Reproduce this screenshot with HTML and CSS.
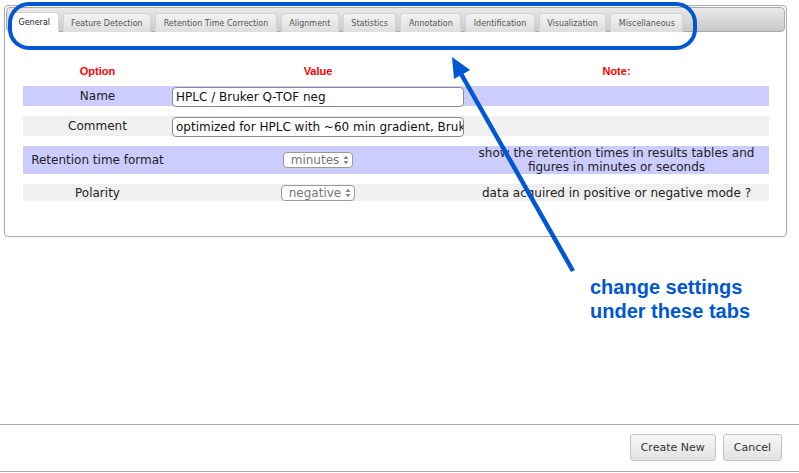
FILE: index.html
```html
<!DOCTYPE html>
<html>
<head>
<meta charset="utf-8">
<link rel="stylesheet" href="styles.css">
</head>
<body>
<div class="page">
  <div class="panel">
    <div class="tabbar">
      <div class="tab active">General</div>
      <div class="tab">Feature Detection</div>
      <div class="tab">Retention Time Correction</div>
      <div class="tab">Alignment</div>
      <div class="tab">Statistics</div>
      <div class="tab">Annotation</div>
      <div class="tab">Identification</div>
      <div class="tab">Visualization</div>
      <div class="tab">Miscellaneous</div>
    </div>
    <div class="content">
      <div class="row head">
        <div class="c1">Option</div>
        <div class="c2">Value</div>
        <div class="c3">Note:</div>
      </div>
      <div class="row blue r-name">
        <div class="c1">Name</div>
        <div class="c2 left"><div class="input">HPLC / Bruker Q-TOF neg</div></div>
        <div class="c3"></div>
      </div>
      <div class="row grey r-name">
        <div class="c1">Comment</div>
        <div class="c2 left"><div class="input">optimized for HPLC with ~60 min gradient, Bruk</div></div>
        <div class="c3"></div>
      </div>
      <div class="row blue r-rt">
        <div class="c1">Retention time format</div>
        <div class="c2"><div class="select"><span>minutes</span><svg class="arr" width="6" height="10" viewBox="0 0 6 10"><polygon points="3,0.5 5.5,4 0.5,4" fill="#8a8a8a"/><polygon points="0.5,6 5.5,6 3,9.5" fill="#8a8a8a"/></svg></div></div>
        <div class="c3 note">show the retention times in results tables and<br>figures in minutes or seconds</div>
      </div>
      <div class="row grey r-pol">
        <div class="c1">Polarity</div>
        <div class="c2"><div class="select"><span>negative</span><svg class="arr" width="6" height="10" viewBox="0 0 6 10"><polygon points="3,0.5 5.5,4 0.5,4" fill="#8a8a8a"/><polygon points="0.5,6 5.5,6 3,9.5" fill="#8a8a8a"/></svg></div></div>
        <div class="c3 note">data acquired in positive or negative mode ?</div>
      </div>
    </div>
  </div>
  <div class="footer">
    <div class="btn">Create New</div>
    <div class="btn">Cancel</div>
  </div>
  <svg class="callout" width="799" height="473" viewBox="0 0 799 473">
    <rect x="10" y="4" width="685" height="44" rx="19" ry="19" fill="none" stroke="#0057d2" stroke-width="4"/>
    <line x1="460" y1="72" x2="573" y2="271" stroke="#0057d2" stroke-width="4.5"/>
    <polygon points="452,57 454,79 470,70" fill="#0057d2"/>
  </svg>
  <div class="callout-text">change settings<br>under these tabs</div>
</div>
</body>
</html>
```

FILE: styles.css
```css
html, body {
  margin: 0;
  padding: 0;
  background: #ffffff;
}
body {
  font-family: "DejaVu Sans", Verdana, sans-serif;
  color: #222;
}
.page {
  position: relative;
  width: 799px;
  height: 473px;
  overflow: hidden;
}
.panel {
  margin: 5px 0 0 4px;
  width: 783px;
  height: 232px;
  box-sizing: border-box;
  border: 1px solid #aaaaaa;
  border-radius: 4px;
  padding: 1px 1px;
}
.tabbar {
  height: 25px;
  box-sizing: border-box;
  border: 1px solid #aaaaaa;
  border-radius: 4px;
  background: linear-gradient(#e9e9e9, #c9c9c9);
  display: flex;
  align-items: flex-end;
  gap: 4px;
  padding: 0 0 0 3px;
}
.tab {
  height: 19px;
  box-sizing: border-box;
  border: 1px solid #d3d3d3;
  border-bottom: none;
  border-radius: 3px 3px 0 0;
  background: linear-gradient(#f2f2f2, #dedede);
  font-size: 8px;
  color: #555;
  padding: 0 7.5px;
  display: flex;
  align-items: center;
  margin-bottom: -1px;
}
.tab.active {
  background: #ffffff;
  color: #222;
  height: 20px;
  padding: 0 7.5px;
}
.content {
  padding: 32px 0 0 17px;
  display: flex;
  flex-direction: column;
  gap: 10px;
}
.row {
  display: grid;
  width: 746px;
  grid-template-columns: 149px 292px 305px;
  align-items: center;
  font-size: 12px;
}
.row.head {
  font-family: "Liberation Sans", Arial, sans-serif;
  font-weight: bold;
  font-size: 11px;
  color: #ff0000;
  height: 14px;
  margin-bottom: -2px;
}
.c1, .c2, .c3 {
  text-align: center;
}
.c2.left {
  text-align: left;
}
.blue { background: #ccccff; }
.grey { background: #f0f0f0; }
.r-name { height: 20px; }
.r-rt { height: 28px; }
.r-pol { height: 17px; }
.input {
  height: 20px;
  box-sizing: border-box;
  border: 1px solid #8a8a8a;
  border-radius: 4px;
  background: #fff;
  font-size: 12px;
  line-height: 18px;
  padding: 0 3px;
  white-space: nowrap;
  overflow: hidden;
  width: 292px;
  position: relative;
  top: 1px;
  color: #111;
}
.select {
  display: inline-flex;
  align-items: center;
  height: 16px;
  box-sizing: border-box;
  border: 1px solid #9a9a9a;
  border-radius: 4px;
  background: #fff;
  color: #777;
  font-size: 12px;
  padding: 0 3px 0 7px;
  gap: 4px;
}
.arr {
  display: block;
  flex: none;
}
.note {
  line-height: 14px;
  color: #222;
}
.footer {
  margin-top: 187px;
  height: 48px;
  box-sizing: border-box;
  border-top: 1px solid #aaaaaa;
  border-bottom: 1px solid #aaaaaa;
  display: flex;
  justify-content: flex-end;
  align-items: center;
  gap: 7px;
  padding: 0 17px 0 0;
}
.btn {
  height: 27px;
  box-sizing: border-box;
  border: 1px solid #c4c4c4;
  border-radius: 3px;
  background: linear-gradient(#f7f7f7, #e2e2e2);
  font-size: 11px;
  color: #333;
  padding: 0 10px;
  display: flex;
  align-items: center;
  position: relative;
  top: -1px;
}
.callout {
  position: absolute;
  left: 0;
  top: 0;
  pointer-events: none;
}
.callout-text {
  position: absolute;
  left: 590px;
  top: 275px;
  font-family: "Liberation Sans", Arial, sans-serif;
  font-weight: bold;
  font-size: 20px;
  line-height: 24px;
  color: #0057d2;
}
```
